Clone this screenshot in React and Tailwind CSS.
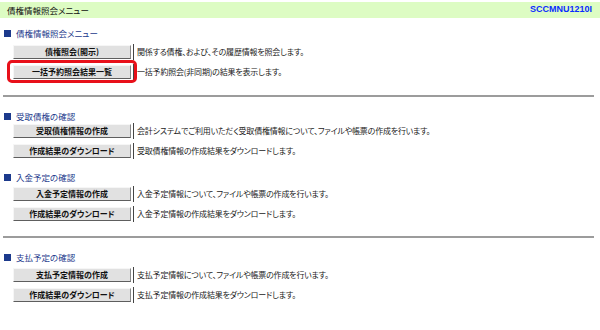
import React from 'react';

const font = "font-['Noto_Sans_CJK_JP',sans-serif] [font-feature-settings:'palt']";

const sections = [
  {
    title: '債権情報照会メニュー',
    top: 'mt-[8px]',
    gap: 'mb-[5px]',
    rows: [
      { label: '債権照会(開示)', text: '関係する債権、および、その履歴情報を照会します。' },
      { label: '一括予約照会結果一覧', text: '一括予約照会(非同期)の結果を表示します。', marked: true },
    ],
    rule: 'mt-[10px]',
  },
  {
    title: '受取債権の確認',
    top: 'mt-[12px]',
    gap: 'mb-[1px]',
    rows: [
      { label: '受取債権情報の作成', text: '会計システムでご利用いただく受取債権情報について、ファイルや帳票の作成を行います。' },
      { label: '作成結果のダウンロード', text: '受取債権情報の作成結果をダウンロードします。' },
    ],
  },
  {
    title: '入金予定の確認',
    top: 'mt-[6px]',
    gap: 'mb-[3px]',
    rows: [
      { label: '入金予定情報の作成', text: '入金予定情報について、ファイルや帳票の作成を行います。' },
      { label: '作成結果のダウンロード', text: '入金予定情報の作成結果をダウンロードします。' },
    ],
    rule: 'mt-[9px]',
  },
  {
    title: '支払予定の確認',
    top: 'mt-[12px]',
    gap: 'mb-[4px]',
    rows: [
      { label: '支払予定情報の作成', text: '支払予定情報について、ファイルや帳票の作成を行います。' },
      { label: '作成結果のダウンロード', text: '支払予定情報の作成結果をダウンロードします。' },
    ],
  },
];

function MenuRow({ label, text, marked }) {
  return (
    <div className="flex items-center h-[14px] mb-[6px] shrink-0">
      <div className="relative ml-[13px] flex">
        <button className="w-[118px] h-[14px] p-0 bg-[#e1e1e1] border-t border-l border-t-[#f6f6f6] border-l-[#f6f6f6] border-b border-r border-b-[#5e5e5e] border-r-[#8a8a8a] text-[8px] leading-[12px] font-bold text-[#111] text-center">
          {label}
        </button>
        {/* red annotation box */}
        {marked && (
          <span className="absolute -top-[5px] -bottom-[4px] -left-[6px] -right-[6px] border-[3px] border-[#e8101a] rounded-[5px]" />
        )}
      </div>
      <div className="w-px h-[16px] bg-[#444] ml-[2px]" />
      <p className="ml-[3px] text-[8px] tracking-[-0.2px] leading-[14px] text-[#222] whitespace-nowrap">{text}</p>
    </div>
  );
}

export default function App() {
  return (
    <div className={`w-[600px] h-[330px] bg-white pt-[2px] overflow-hidden flex flex-col ${font}`}>
      <div className="h-[16px] shrink-0 bg-[#ddfcc3] flex items-center justify-between pl-[7px] pr-[8px]">
        <span className="text-[8.5px] text-[#111]">債権情報照会メニュー</span>
        <span className="font-['Liberation_Sans',sans-serif] text-[9px] font-bold text-[#0a2cff]">SCCMNU1210I</span>
      </div>

      {sections.map((s) => (
        <div key={s.title} className="flex flex-col">
          <div className={`${s.top} ${s.gap} h-[14px] shrink-0 flex items-center pl-[4px]`}>
            <span className="w-[7px] h-[7px] bg-[#1c3a8c]" />
            <span className="ml-[5px] text-[8.5px] text-[#1c3a8c]">{s.title}</span>
          </div>
          {s.rows.map((r) => (
            <MenuRow key={r.label} {...r} />
          ))}
          {s.rule && <div className={`${s.rule} ml-[3px] mr-[6px] h-[2px] shrink-0 bg-[#9c9c9c]`} />}
        </div>
      ))}
    </div>
  );
}
